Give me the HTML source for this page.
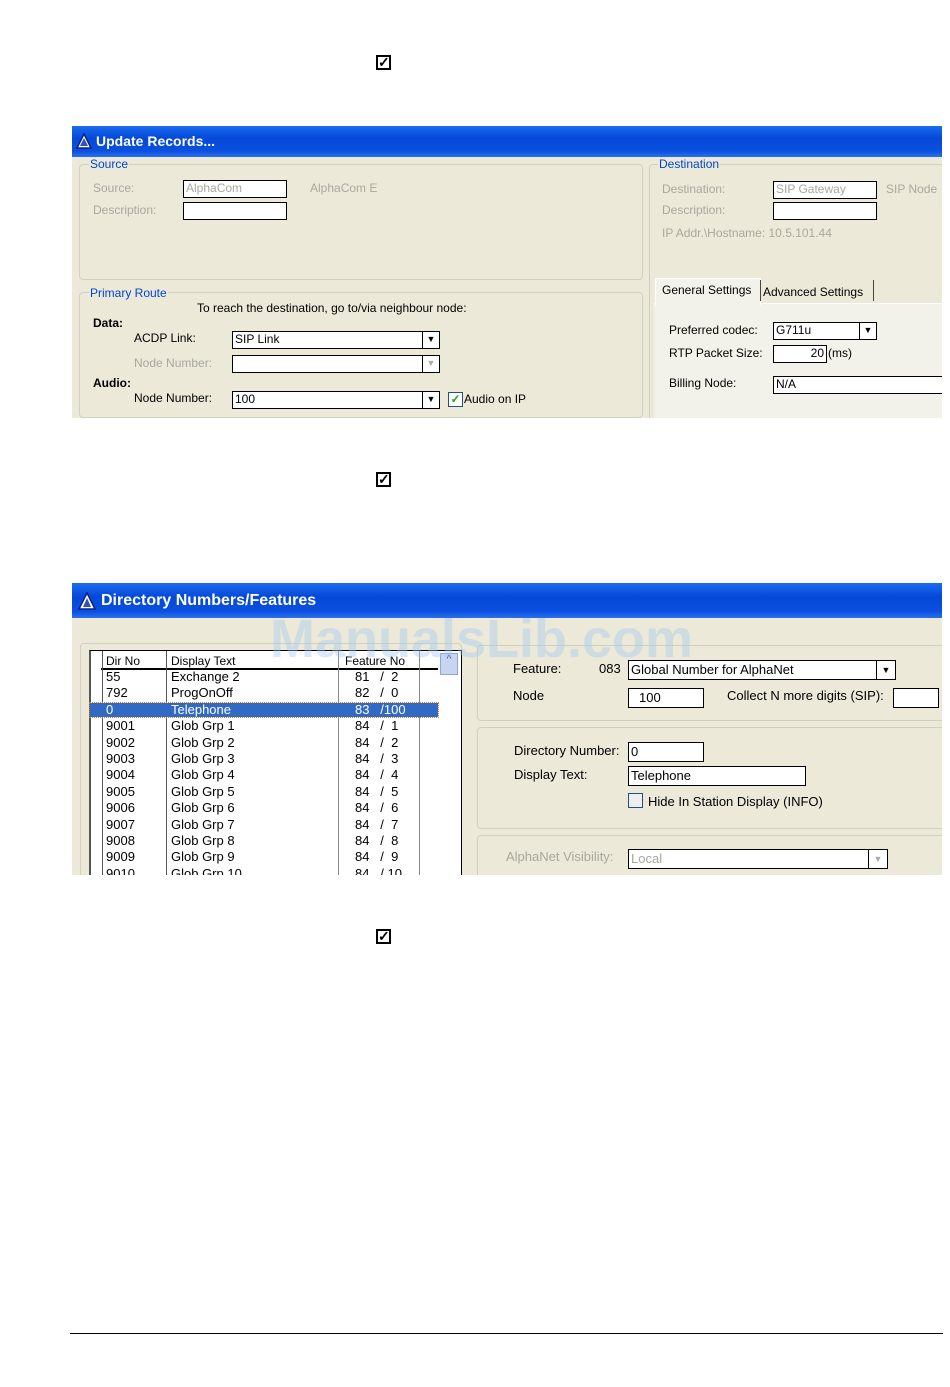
<!DOCTYPE html>
<html><head><style>
body{margin:0;width:950px;height:1387px;background:#fff;position:relative;font-family:"Liberation Sans",sans-serif;overflow:hidden}
.a{position:absolute;white-space:nowrap}
.win{position:absolute;background:#ece9d8;overflow:hidden}
.tb{position:absolute;left:0;right:0;top:0;background:linear-gradient(#1a6cf0,#0548d8 40%,#0a50de 80%,#2a6ef0);color:#fff;font-weight:bold}
.g{position:absolute;border:1px solid #d0d0bf;border-radius:4px}
.lg{position:absolute;background:#ece9d8;color:#0046d5;font-size:12px;padding:0 1px}
.t{position:absolute;font-size:12px;color:#000;white-space:nowrap}
.d{color:#a8a89c}
.in{position:absolute;background:#fff;border:1px solid #000;box-sizing:border-box;font-size:12px;padding-left:2px;line-height:15px;white-space:nowrap;overflow:hidden}
.dd{position:absolute;right:0;top:0;bottom:0;width:16px;border-left:1px solid #000;background:#fff;font-size:9px;text-align:center;line-height:15px}
.cb{position:absolute;width:15px;height:15px;border:2px solid #000;box-sizing:border-box;font-size:14px;line-height:10px;text-align:center;font-weight:bold}
</style></head><body>

<div class="cb" style="left:376px;top:55px">✓</div>
<div class="cb" style="left:376px;top:472px">✓</div>
<div class="cb" style="left:376px;top:929px">✓</div>

<!-- Window 1 -->
<div class="win" style="left:72px;top:126px;width:870px;height:292px">
 <div class="tb" style="height:31px;font-size:14px;line-height:31px;padding-left:24px">Update Records...</div>
 <svg class="a" style="left:4px;top:7px" width="16" height="16"><polygon points="8,1 15,15 1,15" fill="#fff" stroke="#102080" stroke-width="1.5"/><polygon points="8,5 12,13 4,13" fill="#3050c0"/></svg>
 <div class="g" style="left:7px;top:38px;width:562px;height:114px"></div>
 <div class="lg" style="left:17px;top:31px">Source</div>
 <div class="t d" style="left:21px;top:55px">Source:</div>
 <div class="t d" style="left:21px;top:77px">Description:</div>
 <div class="in d" style="left:111px;top:54px;width:104px;height:18px;color:#a8a89c">AlphaCom</div>
 <div class="in" style="left:111px;top:76px;width:104px;height:18px"></div>
 <div class="t d" style="left:238px;top:55px">AlphaCom E</div>

 <div class="g" style="left:7px;top:166px;width:562px;height:124px"></div>
 <div class="lg" style="left:17px;top:160px">Primary Route</div>
 <div class="t" style="left:125px;top:175px">To reach the destination, go to/via neighbour node:</div>
 <div class="t" style="left:21px;top:190px;font-weight:bold">Data:</div>
 <div class="t" style="left:62px;top:205px">ACDP Link:</div>
 <div class="in" style="left:160px;top:205px;width:208px;height:18px">SIP Link<div class="dd">▼</div></div>
 <div class="t d" style="left:62px;top:230px">Node Number:</div>
 <div class="in" style="left:160px;top:229px;width:208px;height:18px"><div class="dd" style="color:#aaa">▼</div></div>
 <div class="t" style="left:21px;top:250px;font-weight:bold">Audio:</div>
 <div class="t" style="left:62px;top:265px">Node Number:</div>
 <div class="in" style="left:160px;top:265px;width:208px;height:18px">100<div class="dd">▼</div></div>
 <div class="a" style="left:376px;top:266px;width:13px;height:13px;border:1px solid #1c5180;background:#fff;color:#21a121;font-size:12px;line-height:12px;text-align:center;font-weight:bold">✓</div>
 <div class="t" style="left:392px;top:266px">Audio on IP</div>

 <div class="g" style="left:577px;top:38px;width:300px;height:260px"></div>
 <div class="lg" style="left:586px;top:31px">Destination</div>
 <div class="t d" style="left:590px;top:56px">Destination:</div>
 <div class="t d" style="left:590px;top:77px">Description:</div>
 <div class="t d" style="left:590px;top:100px">IP Addr.\Hostname: 10.5.101.44</div>
 <div class="in" style="left:701px;top:55px;width:104px;height:18px;color:#a8a89c">SIP Gateway</div>
 <div class="in" style="left:701px;top:76px;width:104px;height:18px"></div>
 <div class="t d" style="left:814px;top:56px">SIP Node</div>
 <div class="a" style="left:582px;top:177px;width:300px;height:120px;background:#f3f2ea;border-top:1px solid #fff"></div>
 <div class="a" style="left:583px;top:152px;width:104px;height:26px;background:#f3f2ea;border:1px solid #fff;border-bottom:none"></div>
 <div class="t" style="left:590px;top:157px">General Settings</div>
 <div class="a" style="left:688px;top:154px;width:112px;height:21px;border-right:1px solid #444;border-left:1px solid #444"></div>
 <div class="t" style="left:691px;top:159px">Advanced Settings</div>
 <div class="t" style="left:597px;top:197px">Preferred codec:</div>
 <div class="in" style="left:701px;top:196px;width:104px;height:18px">G711u<div class="dd">▼</div></div>
 <div class="t" style="left:597px;top:220px">RTP Packet Size:</div>
 <div class="in" style="left:701px;top:219px;width:54px;height:18px;text-align:right;padding-right:2px">20</div>
 <div class="t" style="left:756px;top:220px">(ms)</div>
 <div class="t" style="left:597px;top:250px">Billing Node:</div>
 <div class="in" style="left:701px;top:250px;width:180px;height:18px">N/A</div>
</div>

<!-- Window 2 -->
<div class="win" style="left:72px;top:583px;width:870px;height:292px">
 <div class="tb" style="height:35px;font-size:16px;line-height:36px;padding-left:29px">Directory Numbers/Features</div>
 <svg class="a" style="left:6px;top:9px" width="18" height="18"><polygon points="9,1 17,17 1,17" fill="#fff" stroke="#102080" stroke-width="1.5"/><polygon points="9,6 13,15 5,15" fill="#3050c0"/></svg>
 <div class="g" style="left:8px;top:60px;width:380px;height:240px"></div>
 <div class="a" style="left:17px;top:67px;width:370px;height:230px;background:#fff;border:1px solid #000;border-left:2px solid #555"></div>
 <div class="a" style="left:29px;top:68px;width:337px;height:17px;border-bottom:2px solid #000"></div>
 <div class="a" style="left:30px;top:68px;width:1px;height:230px;background:#555"></div>
 <div class="a" style="left:94px;top:68px;width:1px;height:230px;background:#555"></div>
 <div class="a" style="left:266px;top:68px;width:1px;height:230px;background:#888"></div>
 <div class="a" style="left:347px;top:68px;width:1px;height:230px;background:#888"></div>
 <div class="a" style="left:368px;top:70px;width:16px;height:20px;background:#c8d4f0;border:1px solid #8ea6d8;font-size:10px;text-align:center;color:#304080">^</div>
 <div class="a" style="left:18px;top:120px;width:348px;height:14px;background:#316ac5;outline:1px dotted #d08020"></div>
 <div class="t" style="left:34px;top:70px;line-height:16px">Dir No</div>
 <div class="t" style="left:99px;top:70px;line-height:16px">Display Text</div>
 <div class="t" style="left:273px;top:70px;line-height:16px">Feature No</div>
 <div class="a" style="left:34px;top:86px;font-size:13px;line-height:16.4px">55<br>792<br><span style="color:#fff">0</span><br>9001<br>9002<br>9003<br>9004<br>9005<br>9006<br>9007<br>9008<br>9009<br>9010</div>
 <div class="a" style="left:99px;top:86px;font-size:13px;line-height:16.4px">Exchange 2<br>ProgOnOff<br><span style="color:#fff">Telephone</span><br>Glob Grp 1<br>Glob Grp 2<br>Glob Grp 3<br>Glob Grp 4<br>Glob Grp 5<br>Glob Grp 6<br>Glob Grp 7<br>Glob Grp 8<br>Glob Grp 9<br>Glob Grp 10</div>
 <div class="a" style="left:283px;top:86px;font-size:13px;line-height:16.4px;white-space:pre">81   /  2
82   /  0
<span style="color:#fff">83   /100</span>
84   /  1
84   /  2
84   /  3
84   /  4
84   /  5
84   /  6
84   /  7
84   /  8
84   /  9
84   / 10</div>

 <div class="g" style="left:405px;top:62px;width:480px;height:74px"></div>
 <div class="t" style="left:441px;top:78px;font-size:13px">Feature:</div>
 <div class="t" style="left:527px;top:78px;font-size:13px">083</div>
 <div class="in" style="left:556px;top:77px;width:268px;height:20px;font-size:13px;line-height:18px">Global Number for AlphaNet<div class="dd" style="line-height:18px;width:18px">▼</div></div>
 <div class="t" style="left:441px;top:105px;font-size:13px">Node</div>
 <div class="in" style="left:556px;top:105px;width:76px;height:20px;font-size:13px;line-height:18px;padding-left:10px">100</div>
 <div class="t" style="left:655px;top:105px;font-size:13px">Collect N more digits (SIP):</div>
 <div class="in" style="left:821px;top:105px;width:46px;height:20px"></div>

 <div class="g" style="left:405px;top:144px;width:480px;height:100px"></div>
 <div class="t" style="left:442px;top:160px;font-size:13px">Directory Number:</div>
 <div class="in" style="left:556px;top:159px;width:76px;height:20px;font-size:13px;line-height:18px">0</div>
 <div class="t" style="left:442px;top:184px;font-size:13px">Display Text:</div>
 <div class="in" style="left:556px;top:183px;width:178px;height:20px;font-size:13px;line-height:18px">Telephone</div>
 <div class="a" style="left:556px;top:210px;width:15px;height:15px;border:1px solid #1c5180;background:#eee;box-sizing:border-box"></div>
 <div class="t" style="left:576px;top:211px;font-size:13px">Hide In Station Display (INFO)</div>

 <div class="g" style="left:405px;top:252px;width:480px;height:60px"></div>
 <div class="t d" style="left:434px;top:266px;font-size:13px">AlphaNet Visibility:</div>
 <div class="in" style="left:556px;top:266px;width:260px;height:20px;font-size:13px;line-height:18px;color:#a8a89c">Local<div class="dd" style="line-height:18px;width:18px;color:#aaa">▼</div></div>
</div>

<div class="a" style="left:270px;top:608px;font-size:54px;font-weight:bold;color:rgba(160,200,245,.4)">ManualsLib.com</div>

<div class="a" style="left:70px;top:1333px;width:873px;height:1px;background:#000"></div>
</body></html>
